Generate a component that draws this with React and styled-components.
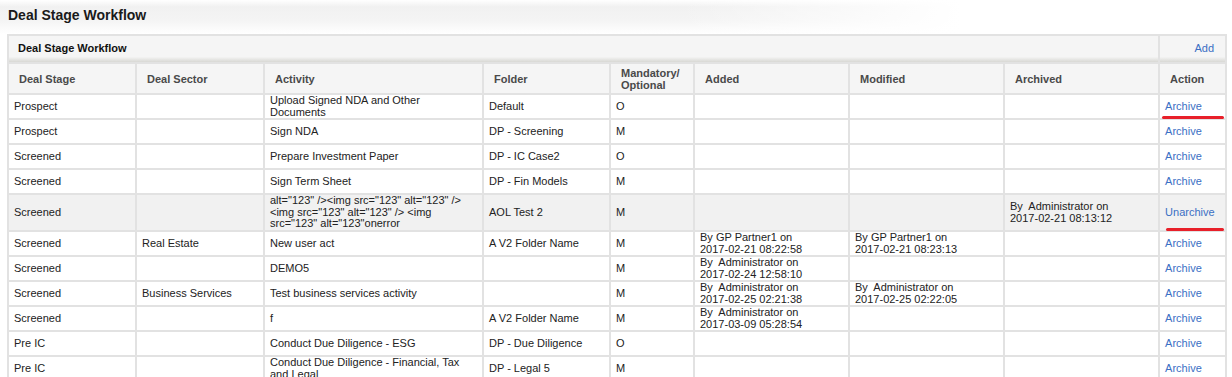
import React from "react";
import styled, { createGlobalStyle } from "styled-components";

const GlobalStyle = createGlobalStyle`
  body {
    margin: 0;
    background: #fff;
    font-family: "Liberation Sans", Arial, sans-serif;
  }
`;

const Page = styled.div`
  width: 1232px;
  height: 377px;
  overflow: hidden;
`;

const TopBar = styled.div`
  height: 30px;
  display: flex;
  align-items: center;
  padding: 0 8px 4px;
  background:
    linear-gradient(to right, rgba(255, 255, 255, 0) 0%, rgba(255, 255, 255, 0) 55%, #fff 78%),
    linear-gradient(to bottom, #fff 0%, #f1f1f1 20%, #f4f4f4 60%, #fff 100%);
`;

const PageTitle = styled.h1`
  margin: 0;
  font-size: 14px;
  font-weight: bold;
  color: #1a1a1a;
`;

const Panel = styled.div`
  position: relative;
  margin: 0 0 0 7px;
  width: 1218px;
`;

const Table = styled.table`
  width: 1218px;
  table-layout: fixed;
  border-collapse: collapse;
  font-size: 11px;
  line-height: 11.5px;
  color: #222;
`;

const PanelHeadCell = styled.th`
  height: 26px;
  padding: 0 ${(p) => (p.$right ? "11px" : "9px")};
  text-align: ${(p) => (p.$right ? "right" : "left")};
  font-weight: ${(p) => (p.$right ? "normal" : "bold")};
  color: #111;
  border: 2px solid #e2e2e2;
  background: linear-gradient(to bottom, #f5f5f5 0%, #f5f5f5 80%, #e6e6e4 90%, #d8d8d4 100%);
`;

const HeadCell = styled.th`
  height: 29px;
  padding: 0 10px;
  text-align: left;
  font-weight: bold;
  line-height: 12px;
  color: #4a4a4a;
  background: #f5f5f5;
  border: 2px solid #e2e2e2;
  vertical-align: middle;
`;

const Row = styled.tr`
  height: ${(p) => (p.$shaded ? "37px" : "auto")};
  background: ${(p) => (p.$shaded ? "#f1f1f1" : "#fff")};
`;

const Cell = styled.td`
  height: 23px;
  padding: 0 5px;
  border: 2px solid #e2e2e2;
  vertical-align: middle;
  white-space: pre-wrap;
  overflow-wrap: break-word;
`;

const Link = styled.a`
  color: #3a6fc4;
  text-decoration: none;
  cursor: pointer;
`;

const Mark = styled.span`
  position: absolute;
  left: ${(p) => p.$x}px;
  top: ${(p) => p.$y}px;
  width: ${(p) => p.$w}px;
  height: 3px;
  border-radius: 2px;
  background: #e8202a;
`;

const columns = [128, 128, 219, 127, 84, 155, 155, 155, 67];

const heads = [
  "Deal Stage",
  "Deal Sector",
  "Activity",
  "Folder",
  "Mandatory/ Optional",
  "Added",
  "Modified",
  "Archived",
  "Action",
];

const rows = [
  { stage: "Prospect", activity: "Upload Signed NDA and Other Documents", folder: "Default", req: "O" },
  { stage: "Prospect", activity: "Sign NDA", folder: "DP - Screening", req: "M" },
  { stage: "Screened", activity: "Prepare Investment Paper", folder: "DP - IC Case2", req: "O" },
  { stage: "Screened", activity: "Sign Term Sheet", folder: "DP - Fin Models", req: "M" },
  {
    stage: "Screened",
    activity:
      'alt="123" /><img src="123" alt="123" /> <img src="123" alt="123" /> <img src="123" alt="123"onerror',
    folder: "AOL Test 2",
    req: "M",
    archived: ["By  Administrator on", "2017-02-21 08:13:12"],
    shaded: true,
  },
  {
    stage: "Screened",
    sector: "Real Estate",
    activity: "New user act",
    folder: "A V2 Folder Name",
    req: "M",
    added: ["By GP Partner1 on", "2017-02-21 08:22:58"],
    modified: ["By GP Partner1 on", "2017-02-21 08:23:13"],
  },
  {
    stage: "Screened",
    activity: "DEMO5",
    req: "M",
    added: ["By  Administrator on", "2017-02-24 12:58:10"],
  },
  {
    stage: "Screened",
    sector: "Business Services",
    activity: "Test business services activity",
    req: "M",
    added: ["By  Administrator on", "2017-02-25 02:21:38"],
    modified: ["By  Administrator on", "2017-02-25 02:22:05"],
  },
  {
    stage: "Screened",
    activity: "f",
    folder: "A V2 Folder Name",
    req: "M",
    added: ["By  Administrator on", "2017-03-09 05:28:54"],
  },
  { stage: "Pre IC", activity: "Conduct Due Diligence - ESG", folder: "DP - Due Diligence", req: "O" },
  {
    stage: "Pre IC",
    activity: "Conduct Due Diligence - Financial, Tax and Legal",
    folder: "DP - Legal 5",
    req: "M",
  },
];

function Stamp({ lines }) {
  if (!lines) return null;
  return (
    <>
      {lines[0]}
      <br />
      {lines[1]}
    </>
  );
}

export default function App() {
  return (
    <Page>
      <GlobalStyle />
      <TopBar>
        <PageTitle>Deal Stage Workflow</PageTitle>
      </TopBar>
      <Panel>
        <Table>
          <colgroup>
            {columns.map((w, i) => (
              <col key={i} style={{ width: w }} />
            ))}
          </colgroup>
          <thead>
            <tr>
              <PanelHeadCell colSpan={8}>Deal Stage Workflow</PanelHeadCell>
              <PanelHeadCell $right>
                <Link>Add</Link>
              </PanelHeadCell>
            </tr>
            <tr>
              {heads.map((h) => (
                <HeadCell key={h}>{h}</HeadCell>
              ))}
            </tr>
          </thead>
          <tbody>
            {rows.map((r, i) => (
              <Row key={i} $shaded={r.shaded}>
                <Cell>{r.stage}</Cell>
                <Cell>{r.sector}</Cell>
                <Cell>{r.activity}</Cell>
                <Cell>{r.folder}</Cell>
                <Cell>{r.req}</Cell>
                <Cell>
                  <Stamp lines={r.added} />
                </Cell>
                <Cell>
                  <Stamp lines={r.modified} />
                </Cell>
                <Cell>
                  <Stamp lines={r.archived} />
                </Cell>
                <Cell>
                  <Link>{r.archived ? "Unarchive" : "Archive"}</Link>
                </Cell>
              </Row>
            ))}
          </tbody>
        </Table>
        <Mark $x={1155} $y={82} $w={62} />
        <Mark $x={1159} $y={194} $w={58} />
      </Panel>
    </Page>
  );
}
